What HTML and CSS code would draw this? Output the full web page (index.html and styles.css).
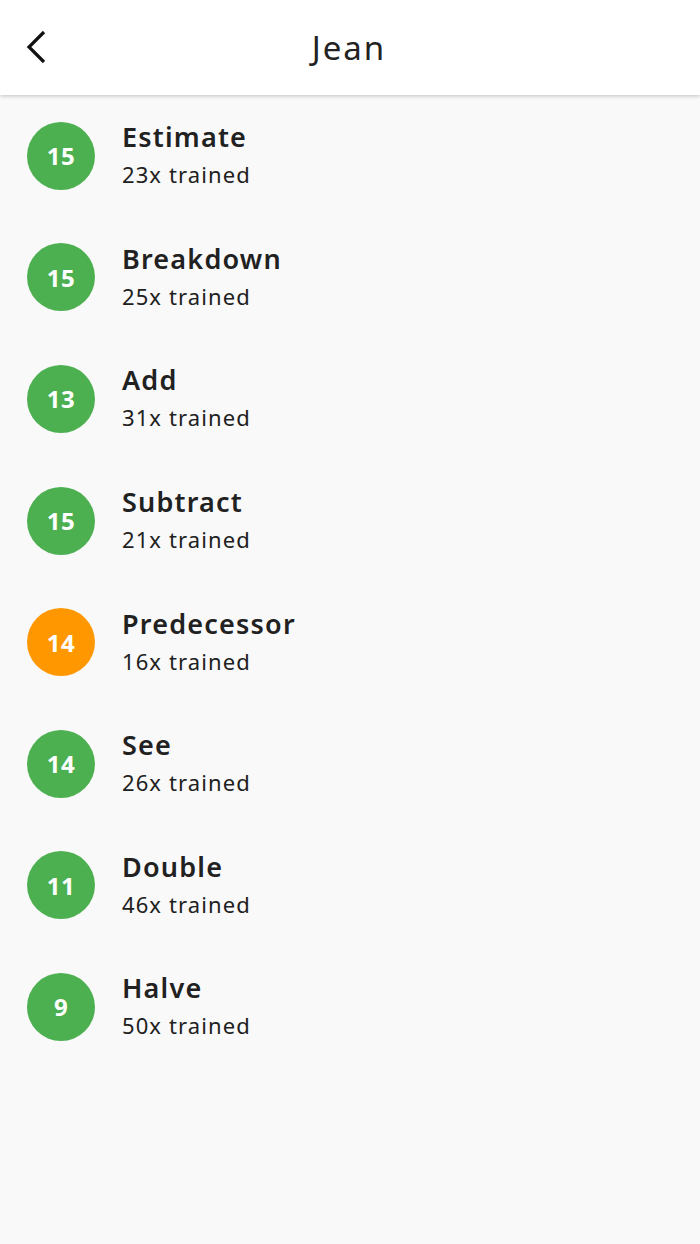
FILE: index.html
```html
<!DOCTYPE html>
<html>
<head>
<meta charset="utf-8">
<link rel="stylesheet" href="styles.css">
</head>
<body>
<header class="topbar">
  <button class="back" aria-label="Back">
    <svg width="24" height="34" viewBox="0 0 24 34"><path d="M19 2 L4 17 L19 32" fill="none" stroke="#111" stroke-width="3.2" stroke-linecap="butt" stroke-linejoin="miter"/></svg>
  </button>
  <h1 class="title">Jean</h1>
</header>
<main class="list">
  <div class="row"><div class="badge green">15</div><div class="info"><div class="name">Estimate</div><div class="sub">23x trained</div></div></div>
  <div class="row"><div class="badge green">15</div><div class="info"><div class="name">Breakdown</div><div class="sub">25x trained</div></div></div>
  <div class="row"><div class="badge green">13</div><div class="info"><div class="name">Add</div><div class="sub">31x trained</div></div></div>
  <div class="row"><div class="badge green">15</div><div class="info"><div class="name">Subtract</div><div class="sub">21x trained</div></div></div>
  <div class="row"><div class="badge orange">14</div><div class="info"><div class="name">Predecessor</div><div class="sub">16x trained</div></div></div>
  <div class="row"><div class="badge green">14</div><div class="info"><div class="name">See</div><div class="sub">26x trained</div></div></div>
  <div class="row"><div class="badge green">11</div><div class="info"><div class="name">Double</div><div class="sub">46x trained</div></div></div>
  <div class="row"><div class="badge green">9</div><div class="info"><div class="name">Halve</div><div class="sub">50x trained</div></div></div>
</main>
</body>
</html>
```
FILE: styles.css
```css
html, body {
  margin: 0;
  padding: 0;
}
body {
  width: 700px;
  height: 1244px;
  background: #f9f9f9;
  font-family: "Noto Sans", "Open Sans", sans-serif;
  color: #212121;
  overflow: hidden;
}
.topbar {
  position: relative;
  height: 95px;
  background: #fff;
  box-shadow: 0 1px 4px rgba(0,0,0,0.22);
  display: flex;
  align-items: center;
  justify-content: center;
  z-index: 1;
}
.back {
  position: absolute;
  left: 25px;
  top: 30px;
  border: 0;
  background: none;
  padding: 0;
  width: 24px;
  height: 34px;
}
.back svg { display: block; }
.title {
  margin: 0 0 0 -2px;
  font-weight: 400;
  font-size: 33px;
  letter-spacing: 2px;
  color: #222;
}
.list {
  display: flex;
  flex-direction: column;
}
.row {
  height: 121.6px;
  display: flex;
  align-items: center;
  padding-left: 27px;
  gap: 27px;
}
.badge {
  width: 68px;
  height: 68px;
  border-radius: 50%;
  color: #fff;
  font-weight: 700;
  font-size: 24px;
  letter-spacing: 0.5px;
  display: flex;
  align-items: center;
  justify-content: center;
  flex: none;
}
.green { background: #4caf50; }
.orange { background: #ff9800; }
.info {
  display: flex;
  flex-direction: column;
  gap: 7px;
  margin-top: -2px;
}
.name {
  font-size: 27px;
  font-weight: 600;
  line-height: 32px;
  letter-spacing: 1.2px;
}
.sub {
  font-size: 22px;
  line-height: 28px;
  letter-spacing: 1.1px;
}
```
